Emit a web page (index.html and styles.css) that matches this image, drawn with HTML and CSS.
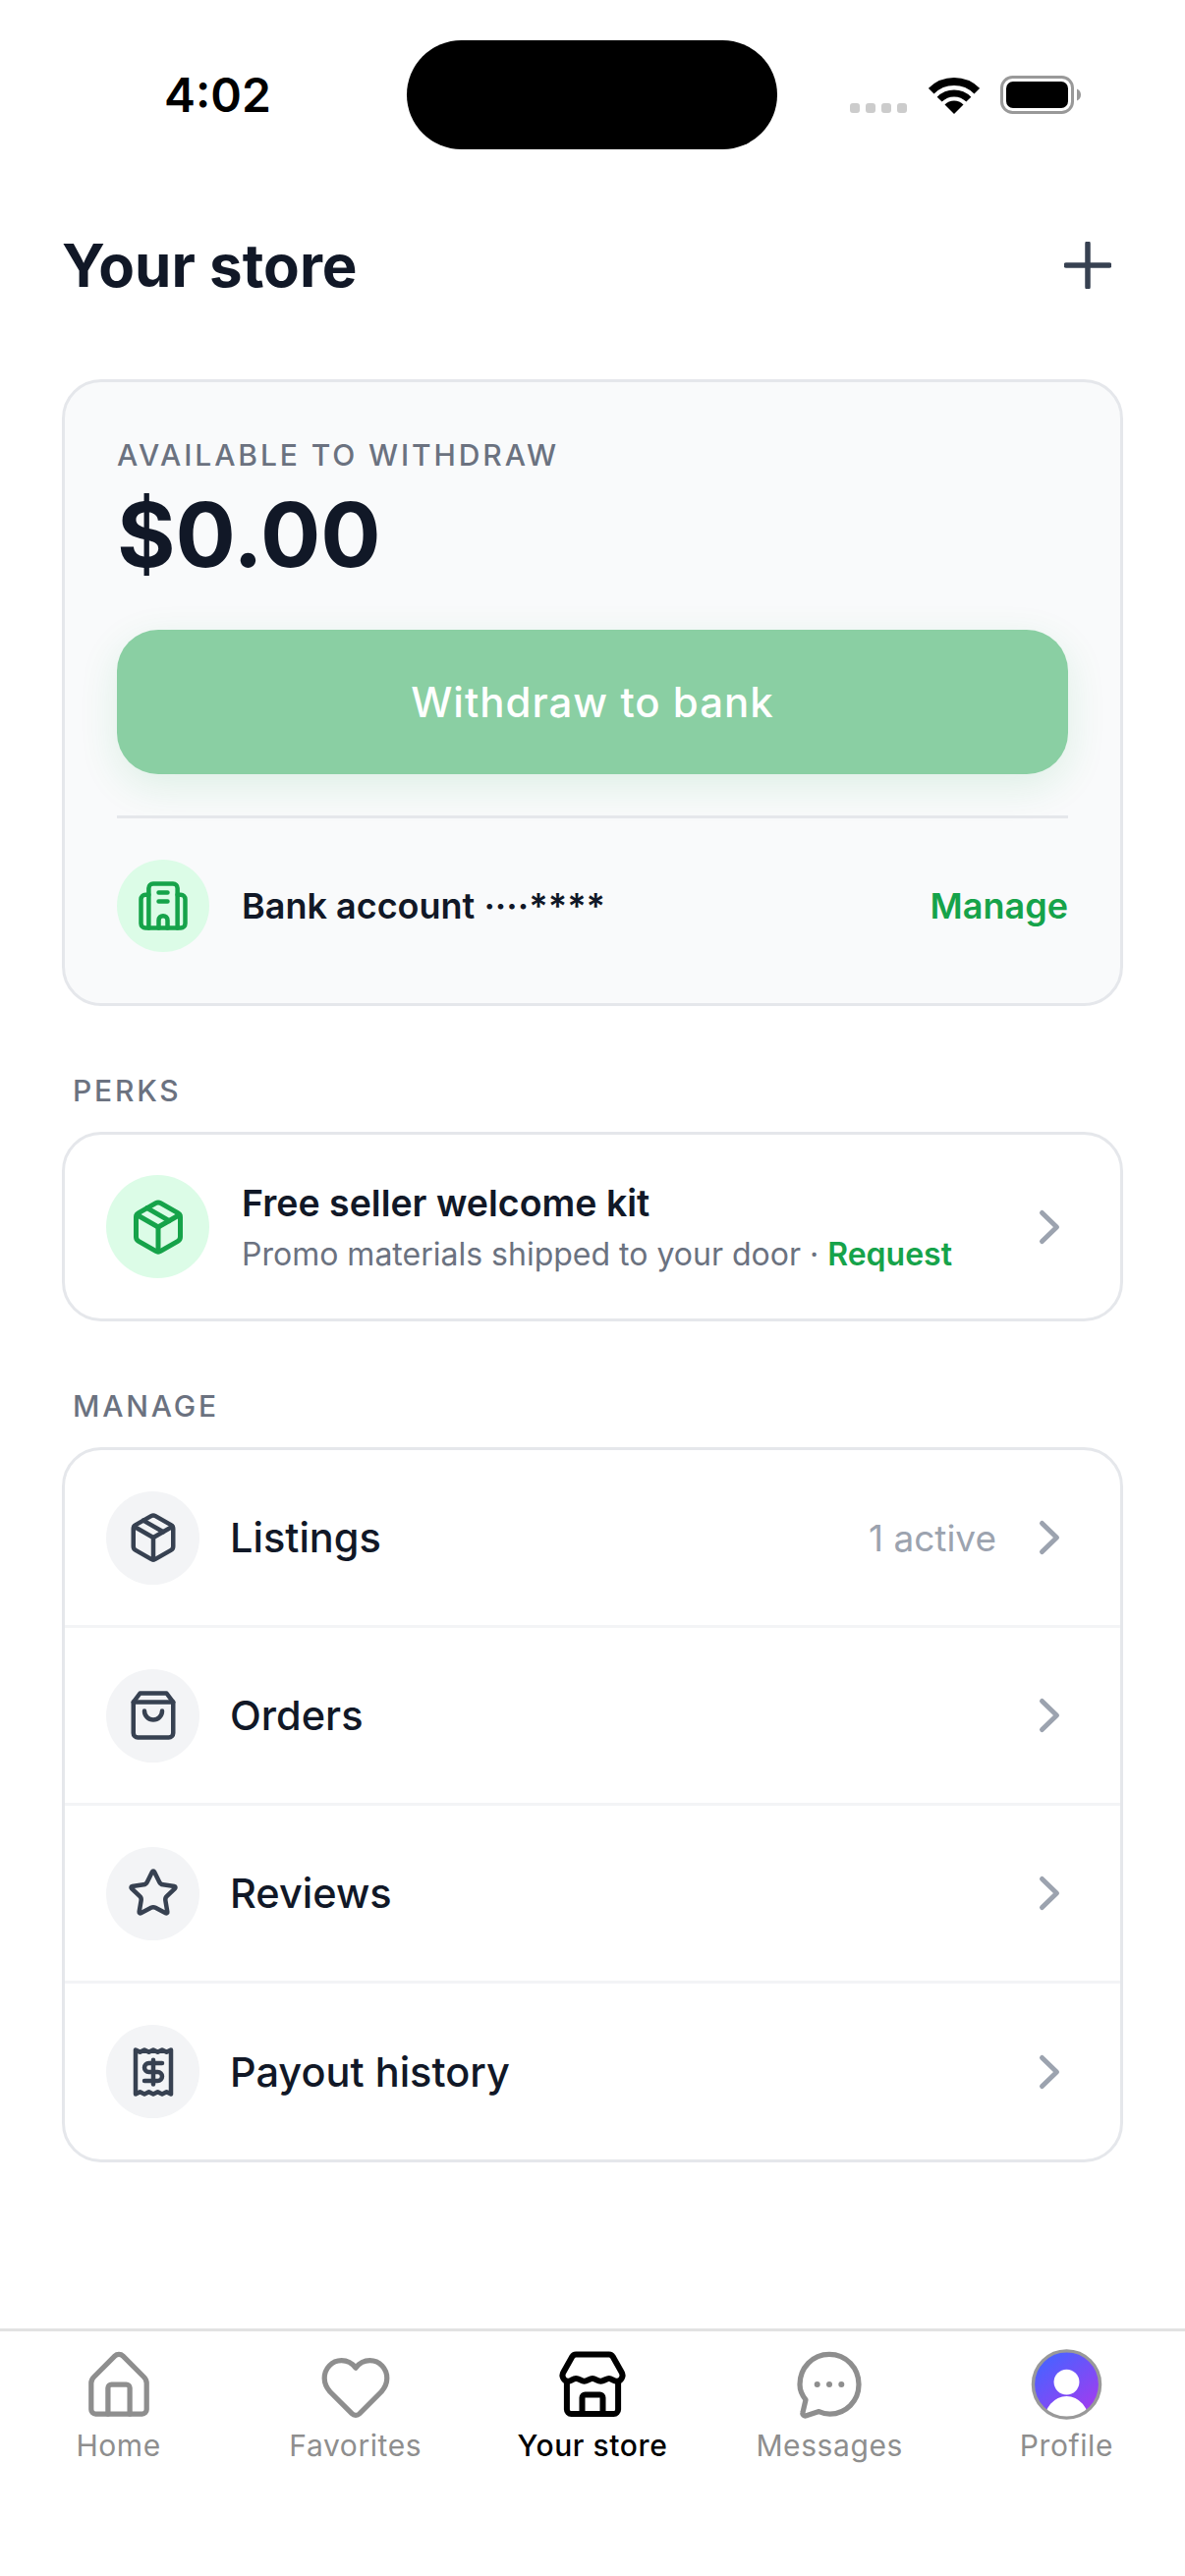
FILE: index.html
```html
<!DOCTYPE html>
<html lang="en">

<head>
    <meta charset="UTF-8">
    <meta name="viewport" content="width=device-width, initial-scale=1.0">
    <title>Your store</title>
    <link rel="stylesheet" href="styles.css">
</head>

<body>
    <div class="phone">

        <div class="statusbar">
            <div class="time">4:02</div>
            <div class="island"></div>
            <div class="status-icons">
                <div class="signal"><span></span><span></span><span></span><span></span></div>
                <svg class="wifi" width="52" height="37" viewBox="0 0 52 37">
                    <path d="M2.7 13.7A33 33 0 0 1 49.3 13.7" fill="none" stroke="#000" stroke-width="8" />
                    <path d="M11.15 22.15A21 21 0 0 1 40.85 22.15" fill="none" stroke="#000" stroke-width="7" />
                    <path d="M26 37L16.5 27.5A13.4 13.4 0 0 1 35.5 27.5Z" fill="#000" />
                </svg>
                <svg class="battery" width="83" height="39" viewBox="0 0 83 39">
                    <rect x="1.5" y="1.5" width="72" height="36" rx="11" fill="none" stroke="#999" stroke-width="3" />
                    <rect x="6" y="6" width="63" height="27" rx="7" fill="#000" />
                    <path d="M78 13.5c2.5 1 4 3.200 4 6s-1.500 5-4 6Z" fill="#999" />
                </svg>
            </div>
        </div>

        <header class="topbar">
            <h1>Your store</h1>
            <svg class="plus" width="48" height="48" viewBox="0 0 48 48">
                <path d="M24 2V46M2 24H46" fill="none" stroke="#374151" stroke-width="5.500" stroke-linecap="round" />
            </svg>
        </header>

        <main class="content">

            <section class="card balance">
                <div class="balance-label">AVAILABLE TO WITHDRAW</div>
                <div class="balance-value">$0.00</div>
                <button class="withdraw">Withdraw to bank</button>
                <hr>
                <div class="bank-row">
                    <div class="circle circle-bank">
                        <svg class="icon-green" width="54" height="54" viewBox="0 0 24 24">
                            <path d="M5.500 22V4a2 2 0 0 1 2-2h9a2 2 0 0 1 2 2v18Z" />
                            <path d="M5.500 7H4a2 2 0 0 0-2 2v11a2 2 0 0 0 2 2h1.500" />
                            <path d="M18.500 7H20a2 2 0 0 1 2 2v11a2 2 0 0 1-2 2h-1.500" />
                            <path d="M10 6h4M10 10h4" />
                            <path d="M10 22v-3.500a2 2 0 0 1 4 0V22" />
                        </svg>
                    </div>
                    <div class="bank-name">Bank account ····****</div>
                    <div class="bank-manage">Manage</div>
                </div>
            </section>

            <div class="section-label">PERKS</div>
            <section class="card perk">
                <div class="circle circle-perk">
                    <svg class="icon-green" width="60" height="60" viewBox="0 0 24 24">
                        <path d="M11 21.730a2 2 0 0 0 2 0l7-4A2 2 0 0 0 21 16V8a2 2 0 0 0-1-1.730l-7-4a2 2 0 0 0-2 0l-7 4A2 2 0 0 0 3 8v8a2 2 0 0 0 1 1.730z" />
                        <path d="M12 22V12" />
                        <path d="m3.300 7 8.700 5 8.700-5" />
                        <path d="m7.500 4.270 9 5.150" />
                    </svg>
                </div>
                <div class="perk-text">
                    <div class="perk-title">Free seller welcome kit</div>
                    <div class="perk-sub">Promo materials shipped to your door · <b>Request</b></div>
                </div>
                <svg class="chevron" width="24" height="38" viewBox="0 0 24 38">
                    <path d="M4.500 4.500L19.500 19L4.500 33.500" />
                </svg>
            </section>

            <div class="section-label">MANAGE</div>
            <section class="card menu">
                <div class="menu-row">
                    <div class="circle circle-gray">
                        <svg class="icon-gray" width="54" height="54" viewBox="0 0 24 24">
                            <path d="M11 21.730a2 2 0 0 0 2 0l7-4A2 2 0 0 0 21 16V8a2 2 0 0 0-1-1.730l-7-4a2 2 0 0 0-2 0l-7 4A2 2 0 0 0 3 8v8a2 2 0 0 0 1 1.730z" />
                            <path d="M12 22V12" />
                            <path d="m3.300 7 8.700 5 8.700-5" />
                            <path d="m7.500 4.270 9 5.150" />
                        </svg>
                    </div>
                    <div class="menu-label">Listings</div>
                    <div class="menu-note">1 active</div>
                    <svg class="chevron" width="24" height="38" viewBox="0 0 24 38">
                        <path d="M4.500 4.500L19.500 19L4.500 33.500" />
                    </svg>
                </div>
                <div class="menu-row">
                    <div class="circle circle-gray">
                        <svg class="icon-gray" width="54" height="54" viewBox="0 0 24 24">
                            <path d="M6 2 3 6v14a2 2 0 0 0 2 2h14a2 2 0 0 0 2-2V6l-3-4Z" />
                            <path d="M3 6h18" />
                            <path d="M16 10a4 4 0 0 1-8 0" />
                        </svg>
                    </div>
                    <div class="menu-label">Orders</div>
                    <svg class="chevron" width="24" height="38" viewBox="0 0 24 38">
                        <path d="M4.500 4.500L19.500 19L4.500 33.500" />
                    </svg>
                </div>
                <div class="menu-row">
                    <div class="circle circle-gray">
                        <svg class="icon-gray" width="54" height="54" viewBox="0 0 24 24">
                            <path d="M11.525 2.295a.530.530 0 0 1 .950 0l2.310 4.679a2.123 2.123 0 0 0 1.595 1.160l5.166.756a.530.530 0 0 1 .294.904l-3.736 3.638a2.123 2.123 0 0 0-.611 1.878l.882 5.140a.530.530 0 0 1-.771.560l-4.618-2.428a2.122 2.122 0 0 0-1.973 0L6.396 21.010a.530.530 0 0 1-.770-.560l.881-5.139a2.122 2.122 0 0 0-.611-1.879L2.160 9.795a.530.530 0 0 1 .294-.906l5.165-.755a2.122 2.122 0 0 0 1.597-1.160z" />
                        </svg>
                    </div>
                    <div class="menu-label">Reviews</div>
                    <svg class="chevron" width="24" height="38" viewBox="0 0 24 38">
                        <path d="M4.500 4.500L19.500 19L4.500 33.500" />
                    </svg>
                </div>
                <div class="menu-row">
                    <div class="circle circle-gray">
                        <svg class="icon-gray" width="54" height="54" viewBox="0 0 24 24">
                            <path d="M4 2v20l2-1 2 1 2-1 2 1 2-1 2 1 2-1 2 1V2l-2 1-2-1-2 1-2-1-2 1-2-1-2 1Z" />
                            <path d="M16 8h-6a2 2 0 1 0 0 4h4a2 2 0 1 1 0 4H8" />
                            <path d="M12 17.500v-11" />
                        </svg>
                    </div>
                    <div class="menu-label">Payout history</div>
                    <svg class="chevron" width="24" height="38" viewBox="0 0 24 38">
                        <path d="M4.500 4.500L19.500 19L4.500 33.500" />
                    </svg>
                </div>
            </section>

        </main>

        <nav class="tabbar">
            <div class="tab">
                <svg class="tab-icon" width="72" height="72" viewBox="0 0 24 24">
                    <path d="M10.600 2.400L3.500 9.500A3 3 0 0 0 2.600 11.600V20.500A1.500 1.500 0 0 0 4.100 22H19.900A1.500 1.500 0 0 0 21.400 20.500V11.600A3 3 0 0 0 20.500 9.500L13.400 2.400A2 2 0 0 0 10.600 2.400Z" />
                    <path d="M8.300 22V13.200A1.200 1.200 0 0 1 9.500 12H14.500A1.200 1.200 0 0 1 15.700 13.200V22" />
                </svg>
                <span>Home</span>
            </div>
            <div class="tab">
                <svg class="tab-icon" width="72" height="72" viewBox="0 0 24 24">
                    <path d="M12 6.400C10.800 4.800 9.200 3.900 7.200 3.900C3.900 3.900 1.400 6.600 1.400 9.900C1.400 11.800 2.200 13.200 3.300 14.500L10.700 21.900A1.800 1.800 0 0 0 13.300 21.900L20.700 14.500C21.800 13.200 22.600 11.800 22.600 9.900C22.600 6.600 20.100 3.900 16.800 3.900C14.800 3.900 13.200 4.800 12 6.400Z" />
                </svg>
                <span>Favorites</span>
            </div>
            <div class="tab tab-active">
                <svg class="tab-icon" width="72" height="72" viewBox="0 0 24 24">
                    <path d="M6.400 1.800H17.600a1.500 1.500 0 0 1 1.300.8l3 5.300a2 2 0 0 1-1.700 3c-1.100 0-1.600-.9-2.600-.9s-1.600.9-2.800.9-1.700-.9-2.800-.9-1.700.9-2.800.9-1.600-.9-2.800-.9-1.500.9-2.600.9a2 2 0 0 1-1.700-3l3-5.300a1.500 1.500 0 0 1 1.300-.8Z" />
                    <path d="M3.300 11v9.500A1.500 1.500 0 0 0 4.800 22h14.400a1.500 1.500 0 0 0 1.500-1.500V11" />
                    <path d="M8.500 22v-5.500a1 1 0 0 1 1-1h5a1 1 0 0 1 1 1V22" />
                </svg>
                <span>Your store</span>
            </div>
            <div class="tab">
                <svg class="tab-icon" width="72" height="72" viewBox="0 0 24 24">
                    <path d="M12 1.800C17.700 1.800 22 6.400 22 12C22 17.600 17.700 22 12.200 22C10.800 22 9.600 21.700 8.500 21.200L4.200 22.600A.9.9 0 0 1 3 21.500L4 17.200C2.700 15.600 2 13.800 2 12C2 6.400 6.300 1.800 12 1.800Z" />
                    <circle class="dot" cx="7.900" cy="12" r="1" />
                    <circle class="dot" cx="12" cy="12" r="1" />
                    <circle class="dot" cx="16.100" cy="12" r="1" />
                </svg>
                <span>Messages</span>
            </div>
            <div class="tab">
                <svg class="tab-avatar" width="75" height="75" viewBox="0 0 75 75">
                    <defs>
                        <linearGradient id="avatar" x1="0.3" y1="0.1" x2="0.85" y2="0.8">
                            <stop offset="0" stop-color="#4f5fff" />
                            <stop offset="1" stop-color="#9a3ff0" />
                        </linearGradient>
                        <clipPath id="inner"><circle cx="37.500" cy="37.500" r="35" /></clipPath>
                    </defs>
                    <circle cx="37.500" cy="37.500" r="35.500" fill="url(#avatar)" />
                    <g clip-path="url(#inner)" fill="#fff">
                        <circle cx="37.500" cy="35" r="13.500" />
                        <ellipse cx="37.500" cy="78" rx="24" ry="28" />
                    </g>
                    <circle cx="37.500" cy="37.500" r="35.500" fill="none" stroke="#999" stroke-width="3.500" />
                </svg>
                <span>Profile</span>
            </div>
        </nav>

    </div>
</body>

</html>
```

FILE: styles.css
```css
* {
    box-sizing: border-box;
}

html,
body {
    margin: 0;
    padding: 0;
    background-color: #fff;
}

body {
    font-family: Inter, "Liberation Sans", sans-serif;
    color: #111827;
}

.phone {
    width: 1206px;
    height: 2622px;
    display: flex;
    flex-direction: column;
    overflow: hidden;
}

/* status bar */
.statusbar {
    display: flex;
    align-items: center;
    height: 111px;
    margin-top: 41px;
    padding-left: 167px;
    flex-shrink: 0;
}

.time {
    width: 247px;
    font-size: 48px;
    font-weight: 600;
    color: #000;
}

.island {
    width: 377px;
    height: 111px;
    background-color: #000;
    border-radius: 56px;
}

.status-icons {
    display: flex;
    align-items: flex-end;
    margin-left: 74px;
}

.signal {
    display: flex;
    gap: 6px;
    margin-bottom: 1px;
}

.signal span {
    width: 10px;
    height: 10px;
    border-radius: 3px;
    background-color: #ccc;
}

.wifi {
    margin-left: 22px;
}

.battery {
    margin-left: 21px;
}

/* header */
.topbar {
    display: flex;
    justify-content: space-between;
    align-items: center;
    height: 234px;
    padding: 2px 75px 0 63px;
    flex-shrink: 0;
}

h1 {
    margin: 0;
    font-size: 60px;
    font-weight: 700;
    letter-spacing: 0;
    color: #111827;
}

/* cards */
.content {
    flex: 1;
    padding: 0 63px;
}

.card {
    border: 3px solid #e5e7eb;
    border-radius: 40px;
    background-color: #fff;
}

.balance {
    height: 638px;
    padding: 56px 53px 0;
    background-color: #f9fafb;
}

.balance-label {
    font-size: 30px;
    line-height: 36px;
    font-weight: 500;
    letter-spacing: 2.900px;
    color: #6b7280;
}

.balance-value {
    font-size: 91px;
    line-height: 126px;
    font-weight: 700;
    color: #111827;
}

.withdraw {
    display: block;
    width: 100%;
    height: 147px;
    margin-top: 34px;
    border: none;
    border-radius: 42px;
    background-color: #8acfa3;
    box-shadow: 0 12px 40px rgba(22, 163, 74, 0.12);
    color: #fff;
    font-family: inherit;
    font-size: 42px;
    font-weight: 500;
    letter-spacing: 1px;
}

hr {
    height: 3px;
    margin: 42px 0 0;
    border: none;
    background-color: #e5e7eb;
}

.bank-row {
    display: flex;
    align-items: center;
    margin-top: 42px;
}

.circle {
    display: flex;
    align-items: center;
    justify-content: center;
    border-radius: 50%;
    flex-shrink: 0;
}

.circle-bank {
    width: 94px;
    height: 94px;
    background-color: #dcfce7;
}

.circle-perk {
    width: 105px;
    height: 105px;
    background-color: #dcfce7;
}

.circle-gray {
    width: 95px;
    height: 95px;
    background-color: #f3f4f6;
}

.icon-green,
.icon-gray,
.tab-icon {
    fill: none;
    stroke-width: 2;
    stroke-linecap: round;
    stroke-linejoin: round;
}

.icon-green {
    stroke: #16a34a;
}

.icon-gray {
    stroke: #374151;
}

.bank-name {
    flex: 1;
    margin-left: 33px;
    font-size: 36px;
    font-weight: 600;
    color: #111827;
}

.bank-manage {
    font-size: 36px;
    font-weight: 600;
    color: #16a34a;
}

.section-label {
    margin: 68px 0 24px 11px;
    font-size: 30px;
    line-height: 36px;
    font-weight: 500;
    letter-spacing: 2.800px;
    color: #6b7280;
}

.perk {
    display: flex;
    align-items: center;
    height: 193px;
    padding: 0 60px 0 42px;
}

.perk-text {
    flex: 1;
    margin-left: 33px;
}

.perk-title {
    font-size: 37.500px;
    line-height: 50px;
    font-weight: 600;
    color: #111827;
}

.perk-sub {
    margin-top: 6px;
    font-size: 32px;
    line-height: 42px;
    color: #6b7280;
}

.perk-sub b {
    font-weight: 600;
    color: #16a34a;
}

.chevron {
    flex-shrink: 0;
    fill: none;
    stroke: #9ca3af;
    stroke-width: 5;
    stroke-linecap: round;
    stroke-linejoin: round;
}

.menu {
    height: 728px;
}

.menu-row {
    display: flex;
    align-items: center;
    height: 181px;
    padding: 0 60px 0 42px;
    border-bottom: 3px solid #f3f4f6;
}

.menu-row:last-child {
    height: 179px;
    border-bottom: none;
}

.menu-label {
    flex: 1;
    margin-left: 31px;
    font-size: 41.500px;
    font-weight: 500;
    color: #111827;
}

.menu-note {
    margin-right: 42px;
    font-size: 37px;
    color: #9ca3af;
}

/* tabs */
.tabbar {
    display: flex;
    height: 252px;
    padding-top: 18px;
    border-top: 3px solid #e2e2e2;
    flex-shrink: 0;
}

.tab {
    flex: 1;
    display: flex;
    flex-direction: column;
    align-items: center;
    color: #8e8e8e;
    font-size: 30px;
    line-height: 36px;
    letter-spacing: 0.600px;
}

.tab-icon {
    stroke: #8e8e8e;
    stroke-width: 1.750;
    margin-bottom: 8px;
}

.tab-icon .dot {
    fill: #8e8e8e;
    stroke: none;
}

.tab-avatar {
    height: 72px;
    margin-bottom: 8px;
    overflow: visible;
}

.tab-active {
    color: #000;
    font-weight: 500;
}

.tab-active .tab-icon {
    stroke: #000;
    stroke-width: 2;
}
```
